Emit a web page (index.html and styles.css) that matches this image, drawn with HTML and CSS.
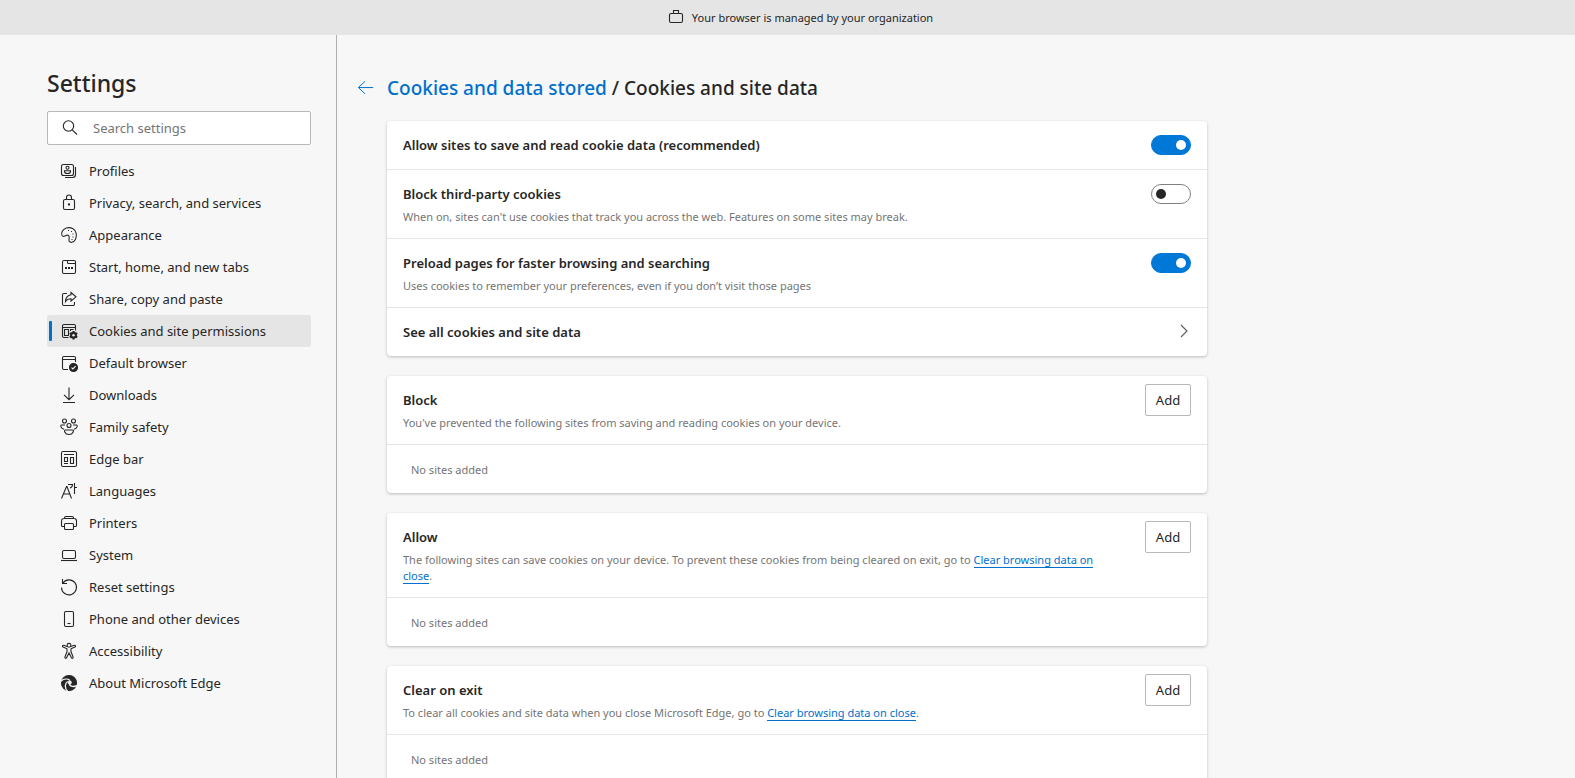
FILE: index.html
```html
<!DOCTYPE html>
<html lang="en">
<head>
    <meta charset="UTF-8">
    <meta name="viewport" content="width=device-width, initial-scale=1.0">
    <title>Settings</title>
    <link rel="stylesheet" href="styles.css">
</head>
<body>
    <div class="managed-banner">
        <svg class="icon" viewBox="0 0 20 20"><rect x="3.500" y="5.500" width="13" height="9" rx="1.500"/><path d="M7.500 5.500v-3h5v3"/></svg>
        <span>Your browser is managed by your organization</span>
    </div>

    <div class="layout">
        <aside class="sidebar">
            <h1>Settings</h1>
            <div class="search-box">
                <svg class="icon" viewBox="0 0 20 20"><circle cx="8.500" cy="8" r="5.200"/><path d="M12.300 11.800l4.700 4.700"/></svg>
                <input type="text" id="search" placeholder="Search settings" aria-label="Search settings">
            </div>
            <nav class="menu">
                <a href="#profiles">
                    <svg class="icon" viewBox="0 0 20 20"><rect x="2.500" y="3.500" width="12" height="11" rx="2"/><circle cx="8.500" cy="6.800" r="1.500"/><path d="M5.500 9.800h6v.7c0 1.200-1.300 2-3 2s-3-.8-3-2zM16.500 6v7.500a3 3 0 0 1-3 3H6"/></svg>
                    Profiles
                </a>
                <a href="#privacy">
                    <svg class="icon" viewBox="0 0 20 20"><rect x="4.500" y="6.500" width="11" height="10" rx="1.500"/><path d="M7.500 6.500v-2a2.500 2.500 0 0 1 5 0v2"/><circle class="solid" cx="10" cy="11.500" r=".6"/></svg>
                    Privacy, search, and services
                </a>
                <a href="#appearance">
                    <svg class="icon" viewBox="0 0 20 20"><path d="M3 10.500C1.800 8 3.500 4.300 7.300 3c4.500-1.400 9 1 9.900 5.300.9 4.200-1.200 8.400-4.500 9-1.900.3-3-.9-2.700-2.700.3-1.700.7-3.200-.5-4.200-1.600-1.200-2.400.7-4.300.9-.9.1-1.800-.1-2.200-.8z"/><path d="M9 5.500h1M12 6.500h1M13.500 9h1M13.500 12h1M12.500 14.500h1"/></svg>
                    Appearance
                </a>
                <a href="#start">
                    <svg class="icon" viewBox="0 0 20 20"><rect x="3.500" y="3.500" width="13" height="13" rx="1.500"/><path d="M8.500 3.500v2a1 1 0 0 0 1 1h7"/><path class="solid" d="M6 10h2v2H6zM9 10h2v2H9zM12 10h2v2h-2z" stroke="none"/></svg>
                    Start, home, and new tabs
                </a>
                <a href="#share">
                    <svg class="icon" viewBox="0 0 20 20"><path d="M8 4.500H5A1.500 1.500 0 0 0 3.500 6v9A1.500 1.500 0 0 0 5 16.500h9a1.500 1.500 0 0 0 1.500-1.500v-2"/><path d="M12 3.500l5 4.300-5 4.200V9.800c-2.600 0-4.300.8-5.500 2.700.2-3.600 2-6.200 5.500-6.700z"/></svg>
                    Share, copy and paste
                </a>
                <a href="#cookies" class="active">
                    <svg class="icon" viewBox="0 0 20 20"><path d="M9.500 16.500H5A1.500 1.500 0 0 1 3.500 15V5A1.500 1.500 0 0 1 5 3.500h10A1.500 1.500 0 0 1 16.500 5v4.500M3.500 6.500h13M9.500 14.500h-4v-6h4zM11.500 10V8.500h3"/><path d="M14.500 10v8.500M10.800 12.100l7.400 4.300M10.800 16.400l7.400-4.300" stroke-width="2"/><circle class="solid" cx="14.500" cy="14.200" r="2.800"/><circle class="hole" cx="14.500" cy="14.200" r="1.200"/></svg>
                    Cookies and site permissions
                </a>
                <a href="#default">
                    <svg class="icon" viewBox="0 0 20 20"><path d="M9 16.500H5A1.500 1.500 0 0 1 3.500 15V5A1.500 1.500 0 0 1 5 3.500h10A1.500 1.500 0 0 1 16.500 5v4M3.500 6.500h13"/><circle class="solid" cx="14.500" cy="14.500" r="4"/><path class="cut" d="M12.500 14.600l1.400 1.400 2.700-2.800"/></svg>
                    Default browser
                </a>
                <a href="#downloads">
                    <svg class="icon" viewBox="0 0 20 20"><path d="M10 2.500v12M5 9.800l5 4.900 5-4.900M4 17.500h12"/></svg>
                    Downloads
                </a>
                <a href="#family">
                    <svg class="icon" viewBox="0 0 20 20"><circle cx="5.500" cy="4" r="2"/><circle cx="14.500" cy="4" r="2"/><circle cx="10" cy="8.500" r="2"/><path d="M6 8H2.500c-1.300 0-1 3.500 2.500 4.300M14 8h3.500c1.300 0 1 3.500-2.500 4.300M6 13h8c.8 0 .8 4.500-4 4.500S5.200 13 6 13z"/></svg>
                    Family safety
                </a>
                <a href="#edgebar">
                    <svg class="icon" viewBox="0 0 20 20"><rect x="2.500" y="2.500" width="15" height="15" rx="1.500"/><path d="M5 5.500h10M5.500 8.500h3v4h-3zM5 14.500h4M11.500 8.500h3v6h-3z"/></svg>
                    Edge bar
                </a>
                <a href="#languages">
                    <svg class="icon" viewBox="0 0 20 20"><path d="M2.500 17.500l5-12h.5l4.500 12M4.500 13h6M9 3.500h4.500c0 2-1 3-2.500 3.500M15.500 2v11M15.500 6.500H18"/></svg>
                    Languages
                </a>
                <a href="#printers">
                    <svg class="icon" viewBox="0 0 20 20"><path d="M5.500 13.500h-2a1 1 0 0 1-1-1V8A2.500 2.500 0 0 1 5 5.500h10A2.500 2.500 0 0 1 17.500 8v4.500a1 1 0 0 1-1 1h-2M5.500 5.500V5A1.500 1.500 0 0 1 7 3.500h6A1.500 1.500 0 0 1 14.500 5v.5"/><rect x="5.500" y="10.500" width="9" height="6" rx="1"/></svg>
                    Printers
                </a>
                <a href="#system">
                    <svg class="icon" viewBox="0 0 20 20"><rect x="3.500" y="5.500" width="13" height="8" rx="1.500"/><path d="M2 15.500h16"/></svg>
                    System
                </a>
                <a href="#reset">
                    <svg class="icon" viewBox="0 0 20 20"><path d="M3.500 2v4.500H8M3.700 6.300A7.500 7.500 0 1 1 2.500 10.500"/></svg>
                    Reset settings
                </a>
                <a href="#phone">
                    <svg class="icon" viewBox="0 0 20 20"><rect x="5.500" y="2.500" width="9" height="15" rx="1.500"/><path d="M8.500 14.500h3"/></svg>
                    Phone and other devices
                </a>
                <a href="#accessibility">
                    <svg class="icon" viewBox="0 0 20 20"><circle cx="10" cy="4.300" r="1.900"/><path d="M8 5.500L4.800 4.300c-1.300-.4-1.900 1.300-.7 1.800L8 7.800v3L6 15.800c-.5 1.500 1.100 2.100 1.700.8L10 12l2.300 4.600c.6 1.300 2.200.7 1.700-.8l-2-5v-3l3.900-1.700c1.200-.5.600-2.200-.7-1.800L12 5.500"/></svg>
                    Accessibility
                </a>
                <a href="#about">
                    <svg class="icon" viewBox="0 0 20 20"><circle class="solid" cx="10" cy="10" r="7.500"/><path class="swirl" d="M1.500 8.500C4.500 5.800 8.500 5.500 11 7.500M8.700 18.500C5.500 15 5.500 10.500 8.800 8.500"/><path class="swirl" d="M10.500 10c-.5 3 3 4.500 7.500 2.700"/><circle class="hole" cx="10.800" cy="9.500" r="1.900"/></svg>
                    About Microsoft Edge
                </a>
            </nav>
        </aside>

        <main class="content">
            <header class="page-header">
                <button class="back-button" aria-label="Back">
                    <svg class="icon" viewBox="0 0 20 20"><path d="M18 9.500H1.500M9 2.500l-7.500 7 7.500 7"/></svg>
                </button>
                <h2><a href="#content">Cookies and data stored</a> / Cookies and site data</h2>
            </header>

            <section class="card">
                <div class="row">
                    <div class="row-text">
                        <label class="row-title" for="allow-cookies">Allow sites to save and read cookie data (recommended)</label>
                    </div>
                    <input type="checkbox" class="toggle" id="allow-cookies" checked>
                </div>
                <div class="row">
                    <div class="row-text">
                        <label class="row-title" for="block-third">Block third-party cookies</label>
                        <p>When on, sites can't use cookies that track you across the web. Features on some sites may break.</p>
                    </div>
                    <input type="checkbox" class="toggle" id="block-third">
                </div>
                <div class="row">
                    <div class="row-text">
                        <label class="row-title" for="preload">Preload pages for faster browsing and searching</label>
                        <p>Uses cookies to remember your preferences, even if you don’t visit those pages</p>
                    </div>
                    <input type="checkbox" class="toggle" id="preload" checked>
                </div>
                <a class="row row-link" href="#all">
                    <span class="row-title">See all cookies and site data</span>
                    <svg class="chevron" viewBox="0 0 16 20"><path d="M6 3l6 6-6 6"/></svg>
                </a>
            </section>

            <section class="card">
                <div class="row">
                    <div class="row-text">
                        <h3 class="row-title">Block</h3>
                        <p>You've prevented the following sites from saving and reading cookies on your device.</p>
                    </div>
                    <button class="add-button">Add</button>
                </div>
                <div class="row empty">No sites added</div>
            </section>

            <section class="card">
                <div class="row">
                    <div class="row-text">
                        <h3 class="row-title">Allow</h3>
                        <p>The following sites can save cookies on your device. To prevent these cookies from being cleared on exit, go to <a href="#clear">Clear browsing data on close</a>.</p>
                    </div>
                    <button class="add-button">Add</button>
                </div>
                <div class="row empty">No sites added</div>
            </section>

            <section class="card">
                <div class="row">
                    <div class="row-text">
                        <h3 class="row-title">Clear on exit</h3>
                        <p>To clear all cookies and site data when you close Microsoft Edge, go to <a href="#clear">Clear browsing data on close</a>.</p>
                    </div>
                    <button class="add-button">Add</button>
                </div>
                <div class="row empty">No sites added</div>
            </section>
        </main>
    </div>
</body>
</html>
```
FILE: styles.css
```css
* {
    box-sizing: border-box;
}

body {
    margin: 0;
    height: 100vh;
    display: flex;
    flex-direction: column;
    background-color: #f7f7f7;
    color: #262626;
    font-family: 'Segoe UI', 'Noto Sans', sans-serif;
    font-size: 13px;
    line-height: 20px;
}

h1, h2, h3, p {
    margin: 0;
}

a {
    color: #0070cc;
    text-decoration: none;
}

button, input {
    font-family: inherit;
    font-size: inherit;
    color: inherit;
}

.icon {
    width: 20px;
    height: 20px;
    flex-shrink: 0;
    fill: none;
    stroke: currentColor;
    stroke-width: 1.1;
}

.icon .solid {
    fill: currentColor;
}

.icon .hole {
    fill: #f0f0f0;
    stroke: none;
}

.icon .cut {
    stroke: #f7f7f7;
}

.icon .swirl {
    stroke: #f7f7f7;
    stroke-width: 1.3;
}

.managed-banner {
    display: flex;
    align-items: center;
    justify-content: center;
    gap: 6px;
    height: 35px;
    flex-shrink: 0;
    padding-left: 24px;
    background-color: #e5e5e5;
    font-size: 11px;
}

.layout {
    display: flex;
    flex: 1;
    min-height: 0;
}

/* Sidebar */
.sidebar {
    width: 337px;
    flex-shrink: 0;
    padding: 32px 25px 0 47px;
    border-right: 1px solid #b0b0b0;
    overflow: hidden;
}

.sidebar h1 {
    font-size: 23px;
    line-height: 32px;
    font-weight: 500;
}

.search-box {
    display: flex;
    align-items: center;
    gap: 13px;
    height: 34px;
    margin-top: 12px;
    padding: 0 12px;
    background-color: #fff;
    border: 1px solid #b8b8b8;
    border-radius: 2px;
}

.search-box input {
    flex: 1;
    min-width: 0;
    padding: 0;
    border: none;
    outline: none;
    background: transparent;
}

.search-box input::placeholder {
    color: #757575;
}

.menu {
    margin-top: 10px;
}

.menu a {
    position: relative;
    display: flex;
    align-items: center;
    gap: 10px;
    height: 32px;
    padding-left: 12px;
    border-radius: 2px;
    color: #262626;
}

.menu a.active {
    background-color: #e5e5e5;
}

.menu a.active::before {
    content: '';
    position: absolute;
    left: 2px;
    top: 6px;
    width: 3px;
    height: 20px;
    border-radius: 1px;
    background-color: #0070cc;
}

/* Content */
.content {
    flex: 1;
    padding: 39px 20px 20px;
    overflow-y: auto;
    scrollbar-width: none;
}

.page-header {
    display: flex;
    align-items: center;
    gap: 12px;
    margin-bottom: 19px;
}

.page-header h2 {
    font-size: 19px;
    line-height: 28px;
    font-weight: 500;
}

.back-button {
    display: flex;
    padding: 0;
    border: none;
    background: none;
    color: #0070cc;
}

.back-button .icon {
    width: 18px;
    height: 18px;
}

.card {
    max-width: 820px;
    margin: 0 0 20px 30px;
    background-color: #fff;
    border-radius: 4px;
    box-shadow: 0 1px 3px rgba(0, 0, 0, 0.25);
}

.row {
    display: flex;
    align-items: flex-start;
    justify-content: space-between;
    padding: 14px 16px;
}

.row + .row {
    border-top: 1px solid #e5e5e5;
}

.row-text {
    flex: 1;
    padding-right: 24px;
}

.row-title {
    display: block;
    font-size: 13px;
    line-height: 20px;
    font-weight: 600;
    color: #262626;
}

.row p {
    margin: 5px 0 -1px;
    font-size: 11px;
    line-height: 16px;
    color: #757575;
}

.row p a {
    border-bottom: 1px solid #0070cc;
}

.row.empty {
    padding: 15px 24px 13px;
    font-size: 11px;
    color: #757575;
}

.chevron {
    width: 16px;
    height: 20px;
    fill: none;
    stroke: #606060;
    stroke-width: 1.2;
}

.toggle {
    appearance: none;
    width: 40px;
    height: 20px;
    margin: 0;
    border: 1px solid #808080;
    border-radius: 10px;
    background-color: #fff;
}

.toggle::before {
    content: '';
    display: block;
    width: 10px;
    height: 10px;
    margin: 4px;
    border-radius: 50%;
    background-color: #262626;
}

.toggle:checked {
    border-color: #0078d7;
    background-color: #0078d7;
}

.toggle:checked::before {
    margin-left: 24px;
    background-color: #fff;
}

.add-button {
    width: 46px;
    height: 32px;
    margin-top: -6px;
    padding: 0;
    border: 1px solid #b8b8b8;
    border-radius: 2px;
    background-color: #fff;
}
```
